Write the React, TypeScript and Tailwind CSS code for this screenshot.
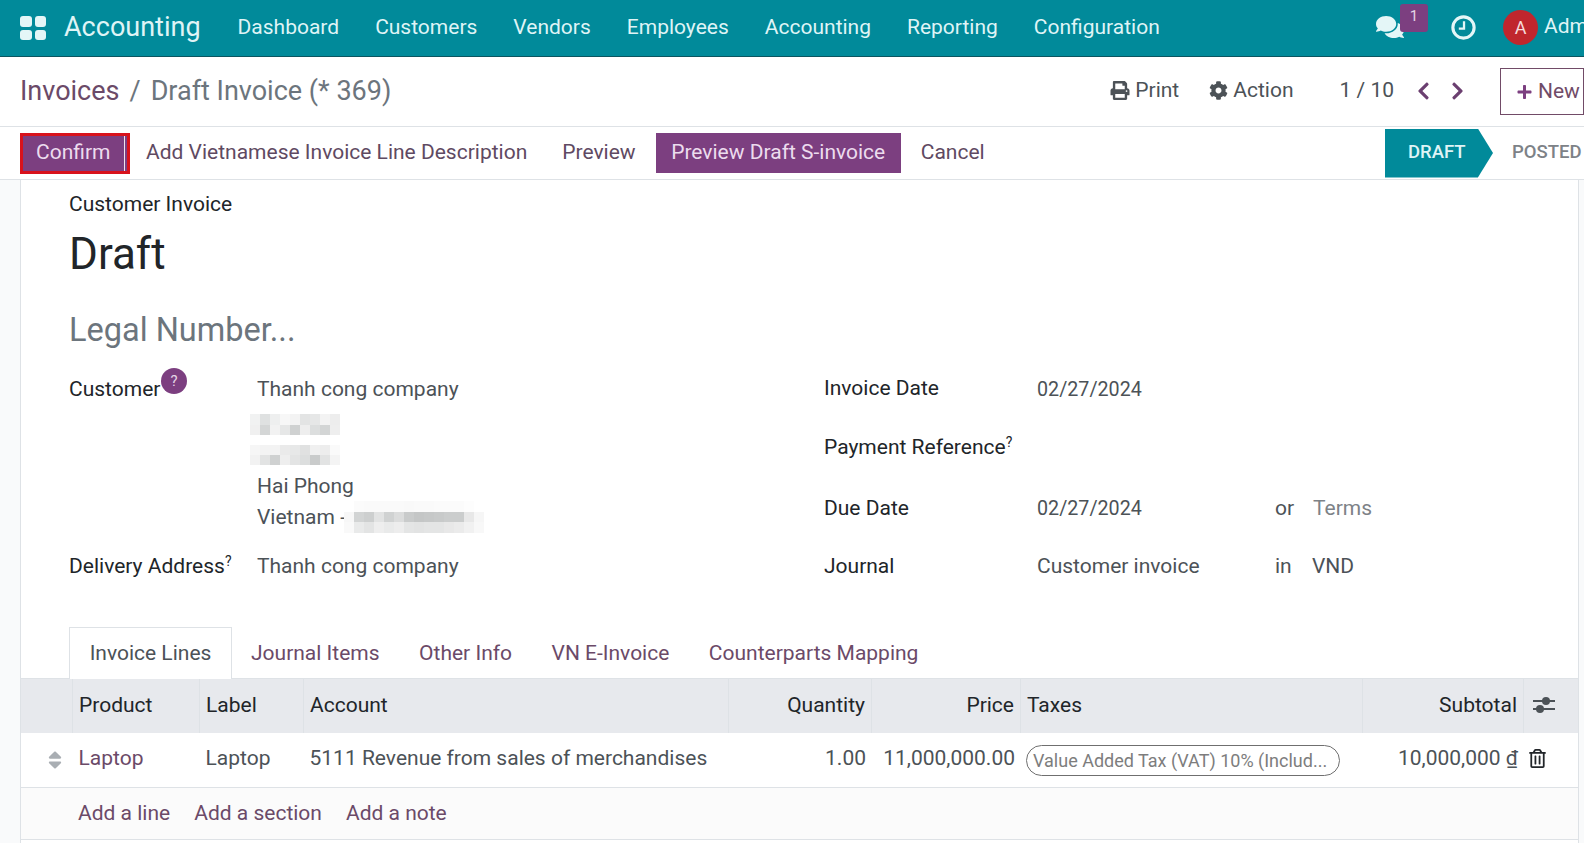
import { FaChevronLeft, FaChevronRight, FaCog, FaComments, FaPlus, FaPrint, FaRegTrashAlt, FaSort } from "react-icons/fa";

const navItems = ["Dashboard", "Customers", "Vendors", "Employees", "Accounting", "Reporting", "Configuration"];
const tabs = ["Journal Items", "Other Info", "VN E-Invoice", "Counterparts Mapping"];

// pixelated blocks hiding the address in the screenshot
const blurA = [
  ["#f1f2f2", "#dfe1e1", "#eeefef", "#f7f7f7", "#f3f3f3", "#e3e4e4", "#e6e7e7", "#f3f3f3", "#ededed"],
  ["#f0f0f0", "#d4d6d6", "#f2f2f2", "#e6e7e7", "#cfd1d1", "#eeeeee", "#dcdede", "#d3d5d5", "#eeeeee"],
];
const blurB = [
  ["#f6f6f6", "#f3f3f3", "#f3f3f3", "#eaeaea", "#e7e8e8", "#e0e1e1", "#f0f0f0", "#ededed", "#fafafa"],
  ["#f2f2f2", "#e2e3e3", "#cfd1d1", "#eeeeee", "#e3e4e4", "#dcdede", "#c9cbcb", "#e2e3e3", "#f4f4f4"],
];
const blurC = [
  ["#ffffff", "#fbfbfb", "#fafafa", "#fafafa", "#fafafa", "#fafafa", "#f9f9f9", "#fafafa", "#fafafa", "#fbfbfb", "#fbfbfb", "#fbfbfb", "#fdfdfd", "#ffffff"],
  ["#f7f7f7", "#d2d4d4", "#cdcfcf", "#e2e3e3", "#d0d2d2", "#dbdcdc", "#c9cbcb", "#c4c6c6", "#c6c8c8", "#c8caca", "#cbcdcd", "#cbcdcd", "#e8e8e8", "#f6f6f6"],
  ["#f9f9f9", "#e9eaea", "#e3e4e4", "#eeeeee", "#e9eaea", "#ededed", "#e4e5e5", "#e2e3e3", "#e4e5e5", "#e4e5e5", "#e8e8e8", "#ebebeb", "#f1f1f1", "#f8f8f8"],
];

function Blur({ rows, cellH }: { rows: string[][]; cellH: string }) {
  return (
    <div className="flex flex-col">
      {rows.map((row, i) => (
        <div key={i} className={`flex ${cellH}`}>
          {row.map((c, j) => (
            <div key={j} className="w-[10px]" style={{ backgroundColor: c }} />
          ))}
        </div>
      ))}
    </div>
  );
}

function Label({ children, className = "" }: { children: React.ReactNode; className?: string }) {
  return <div className={`text-[21px] leading-[31px] text-[#212529] ${className}`}>{children}</div>;
}

const gridCols = "grid grid-cols-[52px_127px_104px_425px_143px_149px_342px_161px_56px]";

export default function App() {
  return (
    <div className="h-screen w-full overflow-hidden bg-white font-['Roboto',sans-serif] text-[21px] text-[#4c5257]">
      <header className="flex h-[57px] items-center whitespace-nowrap border-b border-[#0b5560] bg-[#018a9a] pl-5 text-[#dff4f6]">
        <div className="grid h-[24px] w-[26px] grid-cols-2 gap-[3px]">
          <span className="rounded-[3px] bg-[#e4f6f7]" />
          <span className="rounded-[3px] bg-[#e4f6f7]" />
          <span className="rounded-[3px] bg-[#e4f6f7]" />
          <span className="rounded-[3px] bg-[#e4f6f7]" />
        </div>
        <span className="ml-[18px] pb-[1px] text-[27px]">Accounting</span>
        <nav className="ml-[37px] flex gap-[36px]">
          {navItems.map((n) => (
            <span key={n}>{n}</span>
          ))}
        </nav>
        <div className="ml-auto flex shrink-0 items-center pb-[2px]">
          <div className="relative mr-[23px]">
            <FaComments className="h-[26px] w-[28px] text-[#e4f6f7]" />
            <span className="absolute left-[24px] top-[-10px] flex h-[28px] w-[28px] items-start justify-center rounded-[3px] bg-[#7c3f80] pt-[1px] text-[15px] text-[#e4d5e6]">1</span>
          </div>
          <svg viewBox="0 0 24 24" fill="none" stroke="#e4f6f7" className="ml-[24px] h-[25px] w-[25px]">
            <circle cx="12" cy="12" r="10.2" strokeWidth="3" />
            <path d="M12.5 6v7H7.5" strokeWidth="2.2" />
          </svg>
          <div className="ml-[27px] flex h-[35px] w-[35px] items-center justify-center rounded-full bg-[#c0262d] text-[18px] text-[#f6dcdc]">A</div>
          <div className="ml-[6px] w-[40px] overflow-hidden">Adm</div>
        </div>
      </header>

      <div className="flex h-[70px] items-center whitespace-nowrap border-b border-[#dee2e6] pl-5">
        <span className="text-[27px] text-[#6b4a68]">Invoices</span>
        <span className="mx-[10px] text-[27px] text-[#6c757d]">/</span>
        <span className="text-[27px] text-[#6c757d]">Draft Invoice (* 369)</span>
        <div className="ml-auto flex items-center">
          <div className="flex items-center pb-[2px]">
            <FaPrint className="h-[19px] w-[20px]" />
            <span className="ml-[5px]">Print</span>
            <FaCog className="ml-[30px] h-[19px] w-[19px]" />
            <span className="ml-[5px]">Action</span>
            <span className="ml-[46px]">1 / 10</span>
            <FaChevronLeft className="ml-[22px] h-[20px] w-[15px] text-[#6b3f70]" />
            <FaChevronRight className="ml-[19px] h-[20px] w-[15px] text-[#6b3f70]" />
          </div>
          <div className="ml-[35px] flex h-[47px] w-[84px] items-center overflow-hidden border border-[#714b67] pl-[15px] text-[#714b67]">
            <FaPlus className="h-[16px] w-[17px] shrink-0 text-[#7c3f80]" />
            <span className="ml-[5px]">New</span>
          </div>
        </div>
      </div>

      <div className="flex h-[53px] items-center whitespace-nowrap border-b border-[#dee2e6] pl-5 text-[#5f4a62]">
        <button className="h-[41px] w-[110px] border-[3px] border-[#d8121c] bg-[#7c3f80] pl-[13px] text-left text-[#ecdcee] shadow-[inset_-2px_0_0_#7c3f80,inset_-3px_0_0_#efe6ef]">Confirm</button>
        <span className="ml-[16px]">Add Vietnamese Invoice Line Description</span>
        <span className="ml-[35px]">Preview</span>
        <button className="ml-[20px] flex h-[40px] items-center bg-[#7c3f80] px-[15.5px] text-[#ecdcee]">Preview Draft S-invoice</button>
        <span className="ml-[20px]">Cancel</span>
        <div className="ml-auto flex h-[50px] items-center self-start pt-[2px]">
          <div className="flex h-[49px] w-[108px] items-center bg-[#018a9a] pl-[23px] text-[18.5px] font-medium text-[#dff4f6] [clip-path:polygon(0_0,86%_0,100%_50%,86%_100%,0_100%)]">DRAFT</div>
          <div className="ml-[19px] w-[72px] text-[18.5px] font-medium text-[#7d8287]">POSTED</div>
        </div>
      </div>

      <main className="flex h-[664px] bg-[#f9fafb]">
        <div className="w-[20px] shrink-0" />
        <div className="w-[1559px] shrink-0 border-x border-[#dee2e6] bg-white">
          <div className="pl-[48px]">
            <div className="pt-[9px] leading-[31px] text-[#212529]">Customer Invoice</div>
            <div className="mt-[7px] text-[44px] leading-[54px] text-[#212529]">Draft</div>
            <div className="mt-[29px] text-[32.5px] leading-[40px] text-[#6c757d]">Legal Number...</div>

            <div className="mt-[24px] flex">
              <div className="w-[755px]">
                <div className="flex">
                  <Label className="relative w-[188px] shrink-0">
                    Customer
                    <span className="absolute left-[92px] top-[-6px] flex h-[26px] w-[26px] items-center justify-center rounded-full bg-[#7c3f80] text-[15px] text-[#e4d5e6]">?</span>
                  </Label>
                  <div className="leading-[31px]">
                    <div>Thanh cong company</div>
                    <div className="-ml-[7px] mt-[9px]"><Blur rows={blurA} cellH="h-[10.5px]" /></div>
                    <div className="-ml-[7px] mt-[10px]"><Blur rows={blurB} cellH="h-[10px]" /></div>
                    <div className="mt-[6px]">Hai Phong</div>
                    <div className="relative flex">
                      Vietnam -
                      <div className="absolute left-[87px] top-[-1px]"><Blur rows={blurC} cellH="h-[10.5px]" /></div>
                    </div>
                  </div>
                </div>
                <div className="mt-[18px] flex">
                  <Label className="w-[188px] shrink-0">Delivery Address<sup className="text-[14px]">?</sup></Label>
                  <div className="leading-[31px]">Thanh cong company</div>
                </div>
              </div>
              <div className="grid grid-cols-[213px_238px_auto] grid-rows-[31px_28px_31px_29px_31px_27px_31px] leading-[31px]">
                <Label className="-mt-[1px]">Invoice Date</Label>
                <div className="col-span-2 text-[19.7px]">02/27/2024</div>
                <div className="col-span-3" />
                <Label className="col-span-3 -mt-[1px]">Payment Reference<sup className="text-[14px]">?</sup></Label>
                <div className="col-span-3" />
                <Label>Due Date</Label>
                <div className="text-[19.7px]">02/27/2024</div>
                <div className="flex">
                  <span className="w-[38px]">or</span>
                  <span className="text-[#7d8287]">Terms</span>
                </div>
                <div className="col-span-3" />
                <Label>Journal</Label>
                <div>Customer invoice</div>
                <div className="flex">
                  <span className="w-[37px]">in</span>
                  <span>VND</span>
                </div>
              </div>
            </div>

            <div className="mt-[45px] flex h-[51px] items-stretch">
              <div className="z-10 -mb-px flex w-[163px] items-center justify-center border border-b-0 border-[#dee2e6] bg-white">Invoice Lines</div>
              <div className="flex items-center gap-[39.5px] pl-[19px] pt-[2px] text-[#6b4a68]">
                {tabs.map((t) => (
                  <span key={t}>{t}</span>
                ))}
              </div>
            </div>
          </div>

          <div className={`${gridCols} h-[55px] items-center border-t border-[#dee2e6] bg-[#e7e9ed] text-[#212529]`}>
            <div className="h-full border-r border-[#dee2e6]" />
            <div className="flex h-full items-center border-r border-[#dee2e6] pl-[6px]">Product</div>
            <div className="flex h-full items-center border-r border-[#dee2e6] pl-[6px]">Label</div>
            <div className="flex h-full items-center border-r border-[#dee2e6] pl-[6px]">Account</div>
            <div className="flex h-full items-center justify-end border-r border-[#dee2e6] pr-[6px]">Quantity</div>
            <div className="flex h-full items-center justify-end border-r border-[#dee2e6] pr-[6px]">Price</div>
            <div className="flex h-full items-center border-r border-[#dee2e6] pl-[6px]">Taxes</div>
            <div className="flex h-full items-center justify-end border-r border-[#dee2e6] pr-[6px]">Subtotal</div>
            <div className="flex h-full items-center pb-[2px] pl-[9px]">
              <svg viewBox="0 0 22 20" fill="#4c5257" className="h-[20px] w-[22px]">
                <rect x="0" y="5" width="22" height="2" />
                <rect x="0" y="13" width="22" height="2" />
                <circle cx="13" cy="6" r="4" />
                <circle cx="7" cy="14" r="4" />
              </svg>
            </div>
          </div>

          <div className={`${gridCols} h-[55px] items-center border-b border-[#dee2e6]`}>
            <div className="flex justify-end pr-[11px]"><FaSort className="h-[22px] w-[14px] text-[#a9aeb3]" /></div>
            <div className="-mt-[2px] pl-[5.5px] text-[#6b4a68]">Laptop</div>
            <div className="-mt-[2px] pl-[5.5px]">Laptop</div>
            <div className="-mt-[2px] pl-[5.5px]">5111 Revenue from sales of merchandises</div>
            <div className="-mt-[2px] pr-[6px] text-right">1.00</div>
            <div className="-mt-[2px] pr-[6px] text-right">11,000,000.00</div>
            <div className="pl-[5px]">
              <div className="flex h-[31px] w-[314px] items-center rounded-full border border-[#6f6f6f] pl-[6px] pt-[1px] text-[18px] text-[#7d7d7d]">Value Added Tax (VAT) 10% (Includ...</div>
            </div>
            <div className="-mt-[2px] whitespace-nowrap pr-[6px] text-right">10,000,000 <span className="underline">₫</span></div>
            <div className="-mt-[4px] pl-[5px]"><FaRegTrashAlt className="h-[19px] w-[17px] text-[#212529]" /></div>
          </div>

          <div className="flex h-[52px] items-center gap-[24px] border-b border-[#dee2e6] bg-[#fbfbfb] pl-[57px] text-[#6b4a68]">
            <span>Add a line</span>
            <span>Add a section</span>
            <span>Add a note</span>
          </div>
        </div>
      </main>
    </div>
  );
}
